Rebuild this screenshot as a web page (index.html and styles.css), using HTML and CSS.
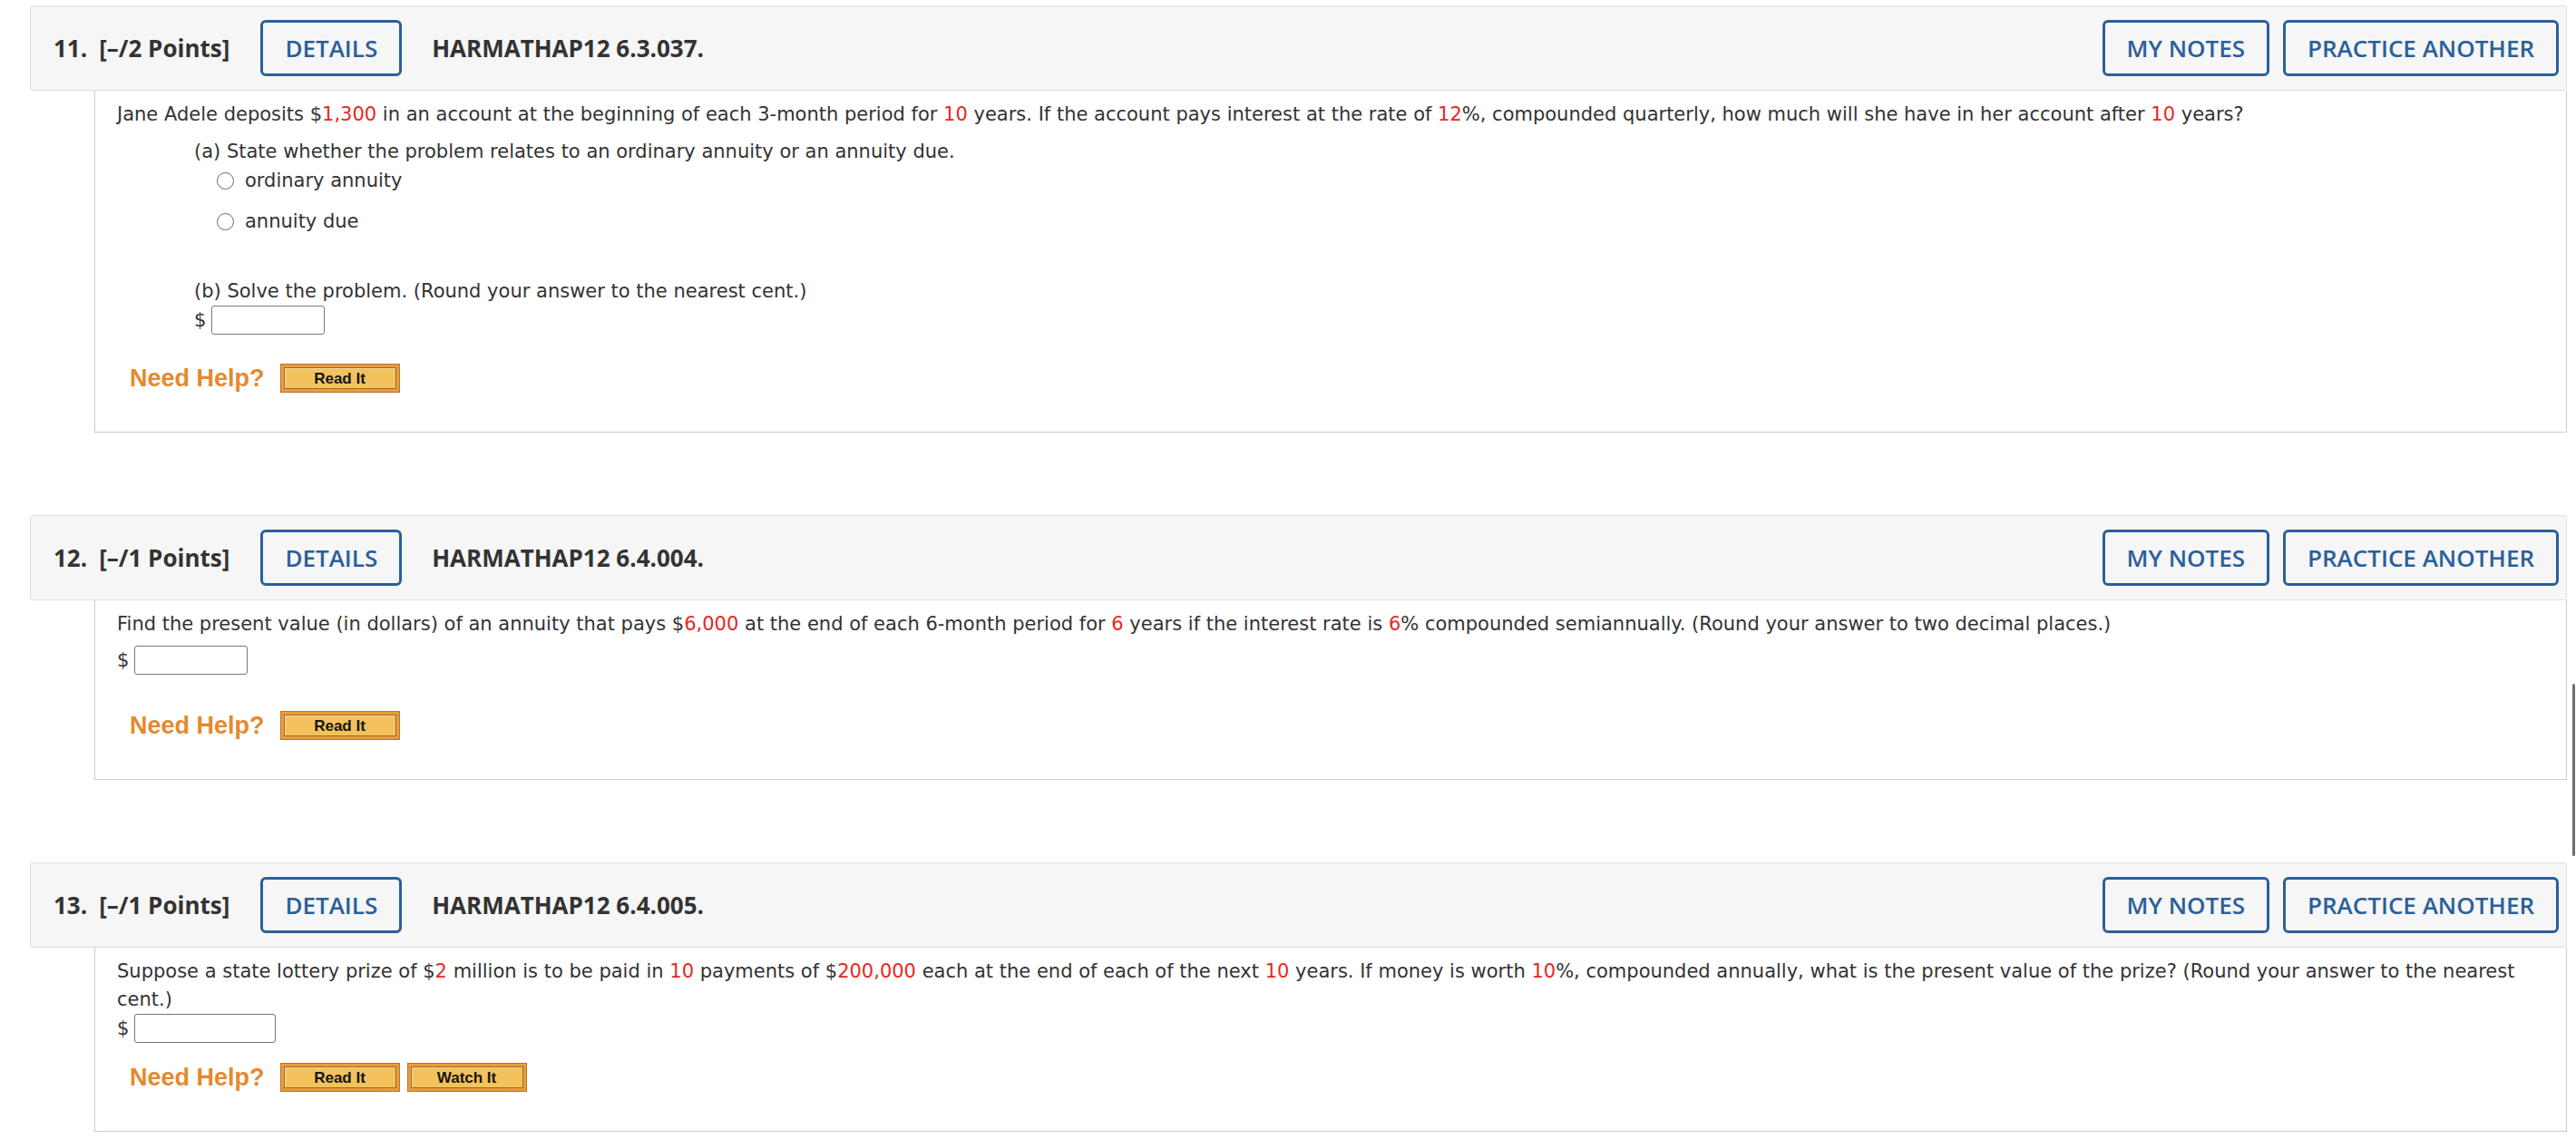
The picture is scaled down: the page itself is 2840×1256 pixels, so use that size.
FILE: index.html
```html
<!DOCTYPE html>
<html lang="en">
<head>
<meta charset="utf-8">
<title>Questions</title>
<link rel="stylesheet" href="styles.css">
</head>
<body>
<div class="page">

  <section class="question">
    <div class="q-head">
      <span class="q-num">11.</span>
      <span class="q-pts">[–/2 Points]</span>
      <span class="btn btn-details">DETAILS</span>
      <span class="q-title">HARMATHAP12 6.3.037.</span>
      <span class="q-actions">
        <span class="btn">MY NOTES</span>
        <span class="btn">PRACTICE ANOTHER</span>
      </span>
    </div>
    <div class="q-body">
      <p class="line">Jane Adele deposits $<span class="red">1,300</span> in an account at the beginning of each 3-month period for <span class="red">10</span> years. If the account pays interest at the rate of <span class="red">12</span>%, compounded quarterly, how much will she have in her account after <span class="red">10</span> years?</p>
      <p class="line indent part-a">(a) State whether the problem relates to an ordinary annuity or an annuity due.</p>
      <label class="radio-row first"><input type="radio" name="q11a" class="radio"><span>ordinary annuity</span></label>
      <label class="radio-row second"><input type="radio" name="q11a" class="radio"><span>annuity due</span></label>
      <p class="line indent part-b">(b) Solve the problem. (Round your answer to the nearest cent.)</p>
      <div class="answer-row indent"><span>$</span><input type="text" class="answer"></div>
      <div class="help-row help-11">
        <span class="need-help">Need Help?</span>
        <span class="help-btn"><span class="help-inner">Read It</span></span>
      </div>
    </div>
  </section>

  <section class="question">
    <div class="q-head">
      <span class="q-num">12.</span>
      <span class="q-pts">[–/1 Points]</span>
      <span class="btn btn-details">DETAILS</span>
      <span class="q-title">HARMATHAP12 6.4.004.</span>
      <span class="q-actions">
        <span class="btn">MY NOTES</span>
        <span class="btn">PRACTICE ANOTHER</span>
      </span>
    </div>
    <div class="q-body">
      <p class="line">Find the present value (in dollars) of an annuity that pays $<span class="red">6,000</span> at the end of each 6-month period for <span class="red">6</span> years if the interest rate is <span class="red">6</span>% compounded semiannually. (Round your answer to two decimal places.)</p>
      <div class="answer-row answer-12"><span>$</span><input type="text" class="answer"></div>
      <div class="help-row help-12">
        <span class="need-help">Need Help?</span>
        <span class="help-btn"><span class="help-inner">Read It</span></span>
      </div>
    </div>
  </section>

  <section class="question">
    <div class="q-head">
      <span class="q-num">13.</span>
      <span class="q-pts">[–/1 Points]</span>
      <span class="btn btn-details">DETAILS</span>
      <span class="q-title">HARMATHAP12 6.4.005.</span>
      <span class="q-actions">
        <span class="btn">MY NOTES</span>
        <span class="btn">PRACTICE ANOTHER</span>
      </span>
    </div>
    <div class="q-body">
      <p class="line">Suppose a state lottery prize of $<span class="red">2</span> million is to be paid in <span class="red">10</span> payments of $<span class="red">200,000</span> each at the end of each of the next <span class="red">10</span> years. If money is worth <span class="red">10</span>%, compounded annually, what is the present value of the prize? (Round your answer to the nearest cent.)</p>
      <div class="answer-row"><span>$</span><input type="text" class="answer answer-wide"></div>
      <div class="help-row help-13">
        <span class="need-help">Need Help?</span>
        <span class="help-btn"><span class="help-inner">Read It</span></span>
        <span class="help-btn"><span class="help-inner">Watch It</span></span>
      </div>
    </div>
  </section>

</div>
<div class="scroll-thumb"></div>
</body>
</html>
```

FILE: styles.css
```css
html, body {
  margin: 0;
  padding: 0;
  background: #ffffff;
}

.page {
  padding: 6px 10px 0 33px;
}

.question {
  margin-bottom: 91px;
}

.question:last-child {
  margin-bottom: 0;
}

.q-head {
  display: flex;
  align-items: center;
  height: 92px;
  padding: 0 8px 0 25px;
  background: #f6f6f6;
  border: 1px solid #dedede;
  border-radius: 3px;
  font-family: "Open Sans", "Liberation Sans", sans-serif;
  font-size: 26px;
  line-height: 36px;
  font-weight: 700;
  color: #333333;
}

.q-pts {
  margin-left: 13px;
}

.btn {
  display: inline-flex;
  align-items: center;
  box-sizing: border-box;
  height: 62px;
  padding: 0 24px;
  border: 3px solid #2a609a;
  border-radius: 6px;
  color: #2a609a;
  font-weight: 600;
  background: transparent;
}

.btn-details {
  margin-left: 34px;
}

.q-title {
  margin-left: 33px;
}

.q-actions {
  margin-left: auto;
  display: flex;
  gap: 15px;
}

.q-body {
  margin-left: 71px;
  border: 1px solid #cccccc;
  border-top: none;
  padding: 11px 25px 43px 24px;
  font-family: "DejaVu Sans", Verdana, sans-serif;
  font-size: 21px;
  line-height: 31px;
  color: #333333;
}

.line {
  margin: 0;
}

.red {
  color: #e8281e;
}

.indent {
  margin-left: 85px;
}

.part-a {
  margin-top: 10px;
}

.part-b {
  margin-top: 46px;
}

.radio-row {
  display: flex;
  align-items: center;
  height: 31px;
  margin-left: 110px;
  gap: 12px;
}

.radio-row.first {
  margin-top: 1px;
}

.radio-row.second {
  margin-top: 14px;
}

.radio {
  appearance: none;
  -webkit-appearance: none;
  box-sizing: border-box;
  width: 19px;
  height: 19px;
  margin: 0;
  border: 1.5px solid #6a6a6a;
  border-radius: 50%;
  background: #ffffff;
}

.answer-row {
  display: flex;
  align-items: center;
  gap: 6px;
  height: 32px;
}

.answer-12 {
  margin-top: 8px;
}

.answer {
  box-sizing: border-box;
  width: 125px;
  height: 32px;
  margin: 0;
  border: 1px solid #767676;
  border-radius: 3px;
  background: #ffffff;
}

.answer-wide {
  width: 156px;
}

.help-row {
  display: flex;
  align-items: center;
  height: 32px;
  margin-left: 14px;
}

.help-11 {
  margin-top: 32px;
}

.help-12 {
  margin-top: 40px;
}

.help-13 {
  margin-top: 22px;
}

.need-help {
  font-family: "Liberation Sans", Arial, sans-serif;
  font-weight: 700;
  font-size: 27px;
  color: #e5892e;
  margin-right: 17px;
}

.help-btn {
  display: inline-flex;
  box-sizing: border-box;
  width: 132px;
  height: 32px;
  padding: 3px;
  margin-right: 8px;
  border: 1px solid #b0772f;
  background: #ee9a3c;
}

.help-inner {
  flex: 1;
  display: flex;
  align-items: center;
  justify-content: center;
  border: 1px solid #946b2c;
  background: #f3c25d;
  box-shadow: inset 1px 1px 0 #f9dc96;
  font-family: "Liberation Sans", Arial, sans-serif;
  font-weight: 700;
  font-size: 17px;
  color: #151515;
}

.scroll-thumb {
  position: fixed;
  right: 1px;
  top: 754px;
  width: 3px;
  height: 190px;
  background: #6e6e6e;
  border-radius: 2px;
}
```
